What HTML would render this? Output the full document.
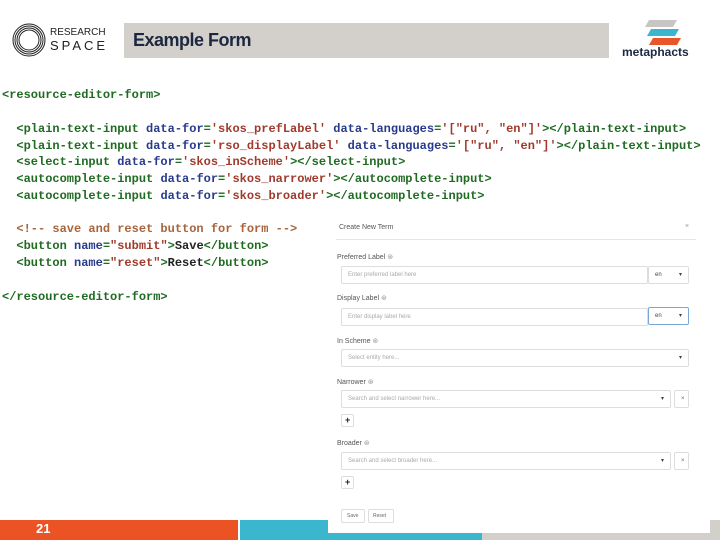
<!DOCTYPE html>
<html><head><style>
*{margin:0;padding:0;box-sizing:border-box}
body{width:720px;height:540px;position:relative;background:#fff;overflow:hidden;font-family:"Liberation Sans",sans-serif}
.code{position:absolute;left:2px;font-family:"Liberation Mono",monospace;font-size:12px;white-space:pre;font-weight:bold;color:#1f6b22}
.b{color:#283a8c}.r{color:#a03a2c}.k{color:#222}.c{color:#a8643a}
.abs{position:absolute}
.lbl{position:absolute;left:337px;font-size:7px;color:#555}
.inp{position:absolute;border:1px solid #ddd;border-radius:2px;font-size:6px;color:#aaa;padding-left:6px;line-height:16px;height:18px}
.dd{position:absolute;font-size:6px;color:#444}
</style></head><body>
<!-- logo -->
<svg class="abs" style="left:12px;top:23px" width="34" height="34" viewBox="0 0 34 34"><g fill="none" stroke="#222" stroke-width="1"><circle cx="17" cy="17" r="16"/><circle cx="17" cy="17" r="14"/><circle cx="17" cy="17" r="12"/><circle cx="17" cy="17" r="10"/></g></svg>
<div class="abs" style="left:50px;top:28px;font-size:10px;color:#222;line-height:10px">RESEARCH</div>
<div class="abs" style="left:50px;top:39px;font-size:13px;color:#222;letter-spacing:3px;line-height:14px">SPACE</div>
<div class="abs" style="left:124px;top:23px;width:485px;height:35px;background:#d3d0cc"></div>
<div class="abs" style="left:133px;top:30px;font-size:18px;font-weight:bold;color:#1b2840;letter-spacing:-0.5px">Example Form</div>
<svg class="abs" style="left:643px;top:18px" width="40" height="30" viewBox="0 0 40 30"><polygon points="6,2 34,2 30,9 2,9" fill="#c8c6c2"/><polygon points="8,11 36,11 32,18 4,18" fill="#3cb6cf"/><polygon points="10,20 38,20 34,27 6,27" fill="#e9562a"/></svg>
<div class="abs" style="left:622px;top:45px;font-size:12px;font-weight:bold;color:#1b2840">metaphacts</div>
<!-- code -->
<div class="code" style="top:88px">&lt;resource-editor-form&gt;</div>
<div class="code" style="top:122px">  &lt;plain-text-input <span class="b">data-for</span>=<span class="r">'skos_prefLabel'</span> <span class="b">data-languages</span>=<span class="r">'["ru", "en"]'</span>&gt;&lt;/plain-text-input&gt;</div>
<div class="code" style="top:139px">  &lt;plain-text-input <span class="b">data-for</span>=<span class="r">'rso_displayLabel'</span> <span class="b">data-languages</span>=<span class="r">'["ru", "en"]'</span>&gt;&lt;/plain-text-input&gt;</div>
<div class="code" style="top:155px">  &lt;select-input <span class="b">data-for</span>=<span class="r">'skos_inScheme'</span>&gt;&lt;/select-input&gt;</div>
<div class="code" style="top:172px">  &lt;autocomplete-input <span class="b">data-for</span>=<span class="r">'skos_narrower'</span>&gt;&lt;/autocomplete-input&gt;</div>
<div class="code" style="top:189px">  &lt;autocomplete-input <span class="b">data-for</span>=<span class="r">'skos_broader'</span>&gt;&lt;/autocomplete-input&gt;</div>
<div class="code c" style="top:222px">  &lt;!-- save and reset button for form --&gt;</div>
<div class="code" style="top:239px">  &lt;button <span class="b">name</span>=<span class="r">"submit"</span>&gt;<span class="k">Save</span>&lt;/button&gt;</div>
<div class="code" style="top:256px">  &lt;button <span class="b">name</span>=<span class="r">"reset"</span>&gt;<span class="k">Reset</span>&lt;/button&gt;</div>
<div class="code" style="top:290px">&lt;/resource-editor-form&gt;</div>
<!-- footer -->
<div class="abs" style="left:0;top:520px;width:238px;height:20px;background:#ec5324"></div>
<div class="abs" style="left:36px;top:521px;font-size:13px;font-weight:bold;color:#fff">21</div>
<div class="abs" style="left:240px;top:520px;width:242px;height:20px;background:#3bb6cf"></div>
<div class="abs" style="left:482px;top:533px;width:228px;height:7px;background:#d3d0cc"></div>
<div class="abs" style="left:710px;top:520px;width:10px;height:20px;background:#d3d0cc"></div>
<!-- form panel -->
<div class="abs" style="left:328px;top:215px;width:378px;height:318px;background:#fff"></div>
<div class="abs" style="left:339px;top:224px;font-size:7px;color:#555">Create New Term</div>
<div class="abs" style="left:685px;top:223px;font-size:7px;color:#999">×</div>
<div class="abs" style="left:336px;top:239px;width:360px;height:1px;background:#e5e5e5"></div>
<div class="lbl" style="top:253px">Preferred Label <span style="color:#999">⊛</span></div>
<div class="inp" style="left:341px;top:266px;width:307px">Enter preferred label here</div>
<div class="inp" style="left:648px;top:266px;width:41px;color:#444">en <span style="float:right;margin-right:6px">▾</span></div>
<div class="lbl" style="top:294px">Display Label <span style="color:#999">⊛</span></div>
<div class="inp" style="left:341px;top:308px;width:307px">Enter display label here</div>
<div class="inp" style="left:648px;top:307px;width:41px;color:#444;border-color:#7aa7d6">en <span style="float:right;margin-right:6px">▾</span></div>
<div class="lbl" style="top:337px">In Scheme <span style="color:#999">⊛</span></div>
<div class="inp" style="left:341px;top:349px;width:348px">Select entity here... <span style="float:right;margin-right:6px;color:#444">▾</span></div>
<div class="lbl" style="top:378px">Narrower <span style="color:#999">⊛</span></div>
<div class="inp" style="left:341px;top:390px;width:330px">Search and select narrower here... <span style="float:right;margin-right:6px;color:#444">▾</span></div>
<div class="inp" style="left:674px;top:390px;width:15px;color:#666">×</div>
<div class="inp" style="left:341px;top:414px;width:13px;height:13px;line-height:11px;padding-left:3px;color:#222;font-size:9px;font-weight:bold">+</div>
<div class="lbl" style="top:439px">Broader <span style="color:#999">⊛</span></div>
<div class="inp" style="left:341px;top:452px;width:330px">Search and select broader here... <span style="float:right;margin-right:6px;color:#444">▾</span></div>
<div class="inp" style="left:674px;top:452px;width:15px;color:#666">×</div>
<div class="inp" style="left:341px;top:476px;width:13px;height:13px;line-height:11px;padding-left:3px;color:#222;font-size:9px;font-weight:bold">+</div>
<div class="inp" style="left:341px;top:509px;width:24px;height:14px;line-height:12px;padding-left:5px;color:#666;font-size:5px">Save</div>
<div class="inp" style="left:368px;top:509px;width:26px;height:14px;line-height:12px;padding-left:4px;color:#666;font-size:5px">Reset</div>
</body></html>
